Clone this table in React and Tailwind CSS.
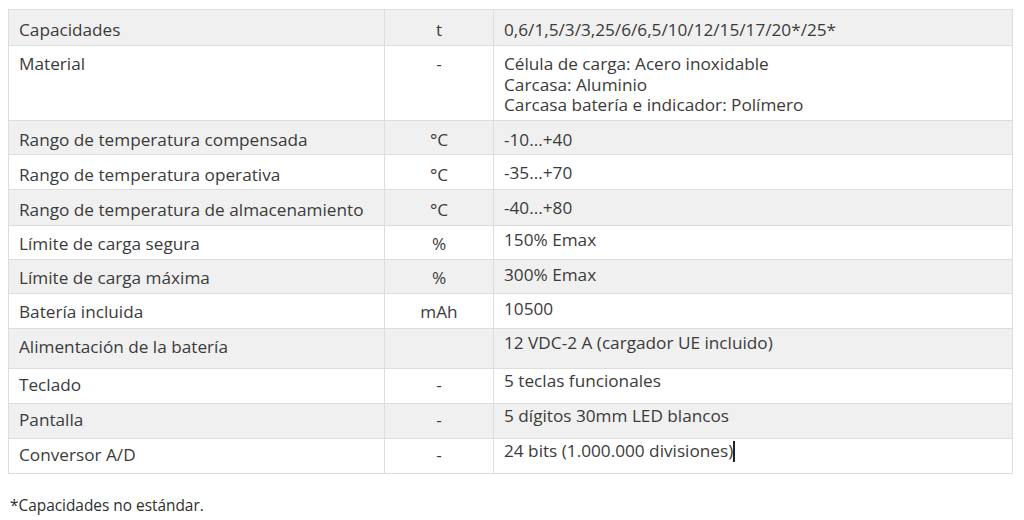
const rows = [
  { label: 'Capacidades', unit: 't', value: ['0,6/1,5/3/3,25/6/6,5/10/12/15/17/20*/25*'], h: 'h-[36px]', p1: 'pt-[10px]', p3: 'pt-[10px]' },
  { label: 'Material', unit: '-', value: ['Célula de carga: Acero inoxidable', 'Carcasa: Aluminio', 'Carcasa batería e indicador: Polímero'], h: 'h-[75px]', p1: 'pt-[8px]', p3: 'pt-[8px]' },
  { label: 'Rango de temperatura compensada', unit: '°C', value: ['-10...+40'], h: 'h-[34px]', p1: 'pt-[9px]', p3: 'pt-[9px]' },
  { label: 'Rango de temperatura operativa', unit: '°C', value: ['-35...+70'], h: 'h-[35px]', p1: 'pt-[10px]', p3: 'pt-[8px]' },
  { label: 'Rango de temperatura de almacenamiento', unit: '°C', value: ['-40...+80'], h: 'h-[36px]', p1: 'pt-[10px]', p3: 'pt-[8px]' },
  { label: 'Límite de carga segura', unit: '%', value: ['150% Emax'], h: 'h-[34px]', p1: 'pt-[8px]', p3: 'pt-[4px]' },
  { label: 'Límite de carga máxima', unit: '%', value: ['300% Emax'], h: 'h-[34px]', p1: 'pt-[8px]', p3: 'pt-[5px]' },
  { label: 'Batería incluida', unit: 'mAh', value: ['10500'], h: 'h-[35px]', p1: 'pt-[8px]', p3: 'pt-[5px]' },
  { label: 'Alimentación de la batería', unit: '', value: ['12 VDC-2 A (cargador UE incluido)'], h: 'h-[40px]', p1: 'pt-[8px]', p3: 'pt-[4px]' },
  { label: 'Teclado', unit: '-', value: ['5 teclas funcionales'], h: 'h-[35px]', p1: 'pt-[6px]', p3: 'pt-[2px]' },
  { label: 'Pantalla', unit: '-', value: ['5 dígitos 30mm LED blancos'], h: 'h-[35px]', p1: 'pt-[6px]', p3: 'pt-[2px]' },
  { label: 'Conversor A/D', unit: '-', value: ['24 bits (1.000.000 divisiones)'], h: 'h-[34px]', p1: 'pt-[6px]', p3: 'pt-[2px]', cursor: true },
];

export default function App() {
  return (
    <div className="w-[1024px] h-[520px] bg-white pl-[8px] pt-[9px] text-[#3b3b3b] text-[17.2px] leading-[20.5px]" style={{ fontFamily: '"Open Sans", "Noto Sans", sans-serif' }}>
      <div className="w-[1005px] border border-[#dddddd]">
        {rows.map((r, i) => (
          <div
            key={r.label}
            className={`grid grid-cols-[376px_109px_1fr] ${r.h} ${i % 2 === 0 ? 'bg-[#f0f0f0]' : 'bg-white'} ${i < rows.length - 1 ? 'border-b border-[#dddddd]' : ''}`}
          >
            <div className={`pl-[10px] whitespace-nowrap border-r border-[#dddddd] ${r.p1}`}>{r.label}</div>
            <div className={`text-center border-r border-[#dddddd] ${r.p1}`}>{r.unit}</div>
            <div className={`pl-[10px] ${r.p3}`}>
              {r.value.map((v, j) => (
                <div key={j}>
                  {v}
                  {r.cursor && <span className="inline-block w-[1.5px] h-[21px] bg-[#222] align-[-5px]" />}
                </div>
              ))}
            </div>
          </div>
        ))}
      </div>
      <p className="mt-[22px] pl-[2px] text-[15.4px] font-medium text-[#2e2e2e]">*Capacidades no estándar.</p>
    </div>
  );
}
